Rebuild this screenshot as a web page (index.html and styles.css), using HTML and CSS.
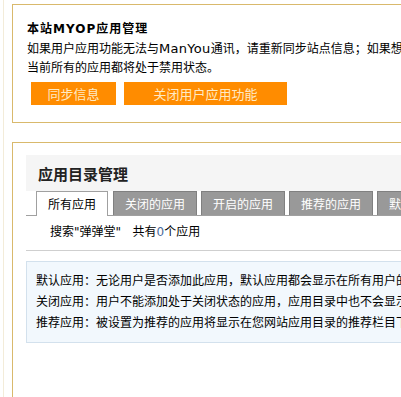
FILE: index.html
```html
<html>
<head>
<meta charset="utf-8">
<meta name="viewport" content="width=device-width, initial-scale=1">
<link rel="stylesheet" href="styles.css">
</head>
<body>
<div class="frame">
  <div class="box box-myop">
    <h3 class="box-title">本站MYOP应用管理</h3>
    <p class="box-text">如果用户应用功能无法与<span class="en">ManYou</span>通讯，请重新同步站点信息；如果想关闭本站的用户应用功能，请点击关闭用户应用功能按钮，关闭后<br>当前所有的应用都将处于禁用状态。</p>
    <div class="btn-row">
      <button class="btn btn-sync">同步信息</button>
      <button class="btn btn-close">关闭用户应用功能</button>
    </div>
  </div>

  <div class="box box-apps">
    <div class="panel">
      <div class="panel-head">应用目录管理</div>
      <ul class="tabs">
        <li class="tab active">所有应用</li>
        <li class="tab">关闭的应用</li>
        <li class="tab">开启的应用</li>
        <li class="tab">推荐的应用</li>
        <li class="tab">默认的应用</li>
      </ul>
      <div class="search-row">搜索"弹弹堂"&nbsp;&nbsp;&nbsp;共有<span class="count">0</span>个应用</div>
      <div class="tips">
        <p>默认应用：无论用户是否添加此应用，默认应用都会显示在所有用户的个人首页和应用菜单中</p>
        <p>关闭应用：用户不能添加处于关闭状态的应用，应用目录中也不会显示该应用</p>
        <p>推荐应用：被设置为推荐的应用将显示在您网站应用目录的推荐栏目下方便用户添加</p>
      </div>
    </div>
  </div>
</div>
</body>
</html>
```

FILE: styles.css
```css
body {
  margin: 0;
  overflow: hidden;
  background-color: #fff;
  font-family: "DejaVu Sans", "Noto Sans CJK SC", sans-serif;
  font-size: 12px;
  color: #000;
}

.frame {
  margin-left: 3px;
  padding: 4px 0 0 8px;
  border-left: 1px solid #f3ecd9;
  height: 100vh;
  box-sizing: border-box;
}

.box {
  width: 900px;
  border: 1px solid #d9b96c;
  box-sizing: border-box;
}

.box-myop {
  padding: 15px 0 17px 14px;
}

.box-title {
  margin: 0;
  font-size: 12px;
  font-weight: bold;
  letter-spacing: 1px;
  line-height: 19px;
}

.box-text {
  margin: 0;
  line-height: 19px;
  white-space: nowrap;
}

.en {
  font-family: "DejaVu Sans", sans-serif;
  font-size: 13px;
  letter-spacing: 0.3px;
}

.btn-row {
  display: flex;
  gap: 8px;
  margin: 4px 0 0 4px;
}

.btn {
  height: 23px;
  border: none;
  padding: 0;
  background-color: #ff8c00;
  color: #ffeac4;
  font-family: "Noto Sans CJK SC", sans-serif;
  font-size: 13px;
  cursor: pointer;
}

.btn-sync {
  width: 85px;
}

.btn-close {
  width: 163px;
}

.box-apps {
  margin-top: 19px;
  height: 400px;
  padding: 12px 0 0 13px;
}

.panel-head {
  height: 36px;
  line-height: 37px;
  padding-left: 12px;
  background-color: #f5f5f5;
  font-family: "Noto Sans CJK SC", sans-serif;
  font-size: 15px;
  font-weight: bold;
  color: #222;
}

.tabs {
  display: flex;
  list-style: none;
  margin: 0;
  padding: 0 0 0 10px;
  border-bottom: 1px solid #a0a0a0;
  height: 24px;
}

.tab {
  height: 23px;
  line-height: 23px;
  padding: 0 11px;
  margin-right: 4px;
  background-color: #999;
  border: 1px solid #808080;
  border-bottom: none;
  color: #fff;
  font-family: "Noto Sans CJK SC", sans-serif;
}

.tab.active {
  height: 24px;
  margin-right: 5px;
  background-color: #fff;
  border-color: #a0a0a0;
  color: #000;
}

.search-row {
  height: 34px;
  line-height: 32px;
  padding-left: 24px;
  border-bottom: 1px solid #cfcfcf;
  white-space: nowrap;
}

.count {
  color: #4a6a9a;
}

.tips {
  margin-top: 10px;
  padding: 9px 0 8px 9px;
  background-color: #f2f8fd;
  border: 1px solid #d3e1ed;
}

.tips p {
  margin: 0;
  line-height: 21px;
  white-space: nowrap;
}
```
